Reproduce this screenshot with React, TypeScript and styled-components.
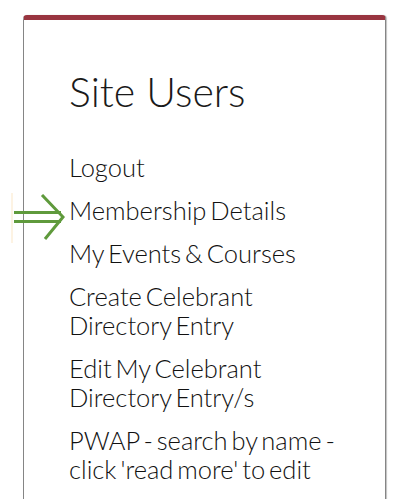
import React from "react";
import styled, { createGlobalStyle } from "styled-components";

const Global = createGlobalStyle`
  html, body { margin: 0; padding: 0; background: #ffffff; }
  body { font-family: Lato, "Open Sans", sans-serif; overflow: hidden; }
`;

const Page = styled.div`
  position: relative;
  width: 400px;
  height: 499px;
  padding-top: 15px;
  box-sizing: border-box;
  overflow: hidden;
`;

const Card = styled.section`
  margin-left: 23px;
  width: 363px;
  box-sizing: border-box;
  min-height: 520px;
  border: 1px solid #858585;
  border-top: 5px solid #993540;
  border-radius: 4px 4px 0 0;
  box-shadow: 1px 0 1px rgba(0, 0, 0, 0.25);
  padding: 48px 20px 0 45px;
  background: #fff;
`;

const Title = styled.h2`
  margin: 0;
  font-family: Lato, sans-serif;
  font-weight: 300;
  font-size: 41px;
  line-height: 48px;
  color: #1a1a1a;
`;

const Menu = styled.ul`
  list-style: none;
  margin: 37px 0 0;
  padding: 0;
  display: flex;
  flex-direction: column;
  gap: 14px;
`;

const Item = styled.li`
  font-family: Lato, sans-serif;
  font-weight: 300;
  font-size: 25.5px;
  line-height: 29px;
  word-spacing: -3px;
  color: #111;
`;

const Marker = styled.div`
  position: absolute;
  left: 11px;
  top: 193px;
  width: 2px;
  height: 50px;
  background: #fdf3e3;
`;

const Arrow = styled.svg`
  position: absolute;
  left: 12px;
  top: 194px;
`;

const items = [
  ["Logout"],
  ["Membership Details"],
  ["My Events & Courses"],
  ["Create Celebrant", "Directory Entry"],
  ["Edit My Celebrant", "Directory Entry/s"],
  ["PWAP - search by name -", "click 'read more' to edit"],
];

export default function App() {
  return (
    <>
      <Global />
      <Page>
        <Card>
          <Title>Site Users</Title>
          <Menu>
            {items.map((lines, i) => (
              <Item key={i}>
                {lines.map((l, j) => (
                  <React.Fragment key={j}>
                    {j > 0 && <br />}
                    {l}
                  </React.Fragment>
                ))}
              </Item>
            ))}
          </Menu>
        </Card>
        <Marker />
        <Arrow width="56" height="48" viewBox="0 0 56 48">
          <g stroke="#5f9a3c" strokeWidth="3" fill="none" strokeLinecap="butt">
            <line x1="2" y1="18.5" x2="49" y2="18.5" />
            <line x1="2" y1="27.5" x2="49" y2="27.5" />
            <polyline points="30,1 51,23 33,45" strokeLinejoin="miter" />
          </g>
        </Arrow>
      </Page>
    </>
  );
}
